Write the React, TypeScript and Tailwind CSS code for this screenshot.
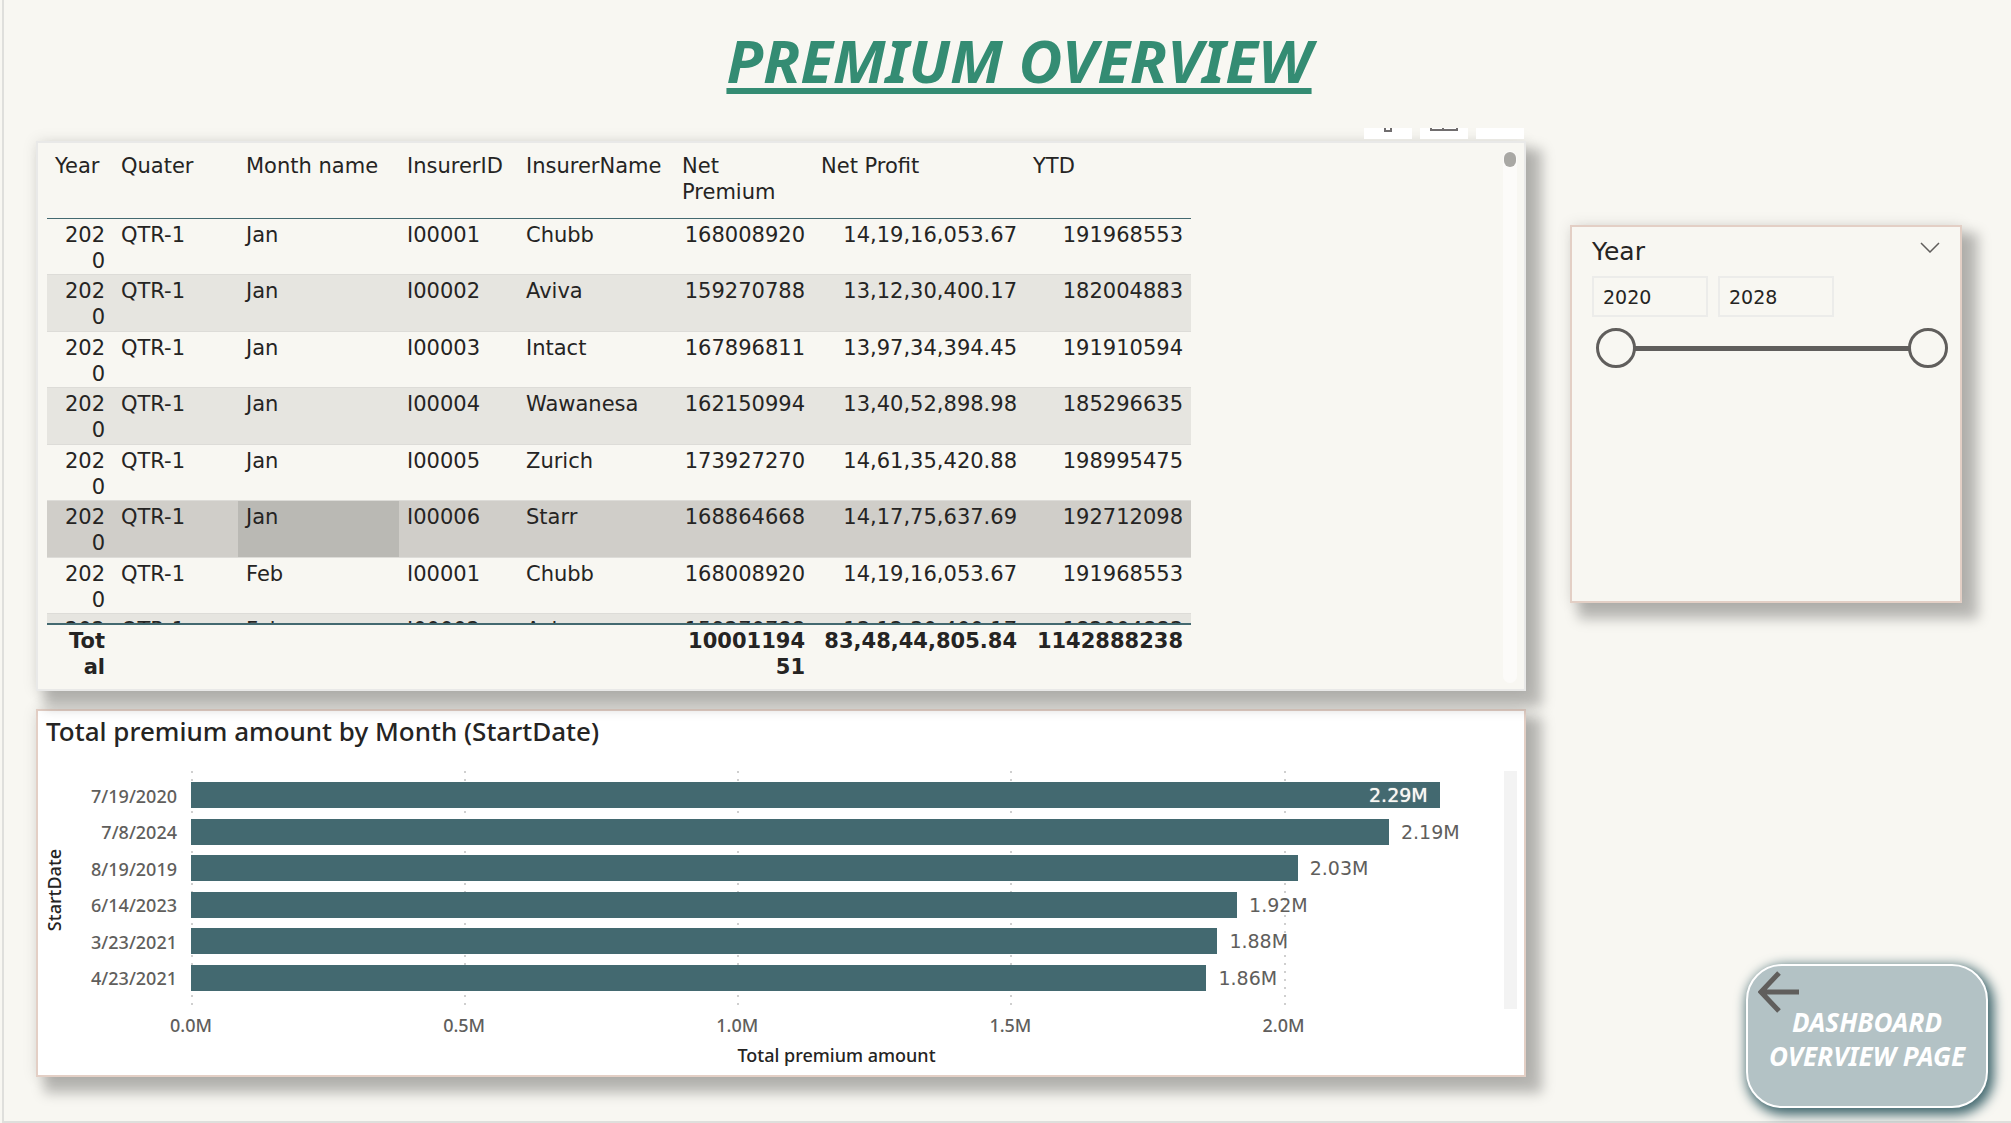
import { useState } from 'react';

type Row = [string, string, string, string, string, string, string, string];

const rows: Row[] = [
  ['2020', 'QTR-1', 'Jan', 'I00001', 'Chubb', '168008920', '14,19,16,053.67', '191968553'],
  ['2020', 'QTR-1', 'Jan', 'I00002', 'Aviva', '159270788', '13,12,30,400.17', '182004883'],
  ['2020', 'QTR-1', 'Jan', 'I00003', 'Intact', '167896811', '13,97,34,394.45', '191910594'],
  ['2020', 'QTR-1', 'Jan', 'I00004', 'Wawanesa', '162150994', '13,40,52,898.98', '185296635'],
  ['2020', 'QTR-1', 'Jan', 'I00005', 'Zurich', '173927270', '14,61,35,420.88', '198995475'],
  ['2020', 'QTR-1', 'Jan', 'I00006', 'Starr', '168864668', '14,17,75,637.69', '192712098'],
  ['2020', 'QTR-1', 'Feb', 'I00001', 'Chubb', '168008920', '14,19,16,053.67', '191968553'],
  ['2020', 'QTR-1', 'Feb', 'I00002', 'Aviva', '159270788', '13,12,30,400.17', '182004883'],
];

const headers = ['Year', 'Quater', 'Month name', 'InsurerID', 'InsurerName', 'Net Premium', 'Net Profit', 'YTD'];
const totals = ['Total', '', '', '', '', '1000119451', '83,48,44,805.84', '1142888238'];
const isNumeric = (column: number) => column === 0 || column > 4;

const HIGHLIGHTED_ROW = 5;
const HIGHLIGHTED_COLUMN = 2;

const bars = [
  { date: '7/19/2020', value: 2.286, label: '2.29M', inside: true },
  { date: '7/8/2024', value: 2.193, label: '2.19M' },
  { date: '8/19/2019', value: 2.026, label: '2.03M' },
  { date: '6/14/2023', value: 1.915, label: '1.92M' },
  { date: '3/23/2021', value: 1.879, label: '1.88M' },
  { date: '4/23/2021', value: 1.859, label: '1.86M' },
];
const AXIS_MAX = 2.4;
const ticks = ['0.0M', '0.5M', '1.0M', '1.5M', '2.0M'];

const shadow = 'shadow-[12px_12px_12px_4px_rgba(0,0,0,0.26),0_0_14px_rgba(0,0,0,0.1)]';

function rowColor(index: number) {
  if (index === HIGHLIGHTED_ROW) return 'bg-[#d0cec9]';
  return index % 2 ? 'bg-[#e6e5e0]' : 'bg-[#f8f7f2]';
}

const tableClass = 'w-[1144px] table-fixed border-separate border-spacing-0 text-[21px] leading-[26px] text-[#252423]';

function Columns() {
  return (
    <colgroup>
      <col className="w-[66px]" />
      <col className="w-[125px]" />
      <col className="w-[161px]" />
      <col className="w-[119px]" />
      <col className="w-[156px]" />
      <col className="w-[139px]" />
      <col className="w-[212px]" />
      <col className="w-[166px]" />
    </colgroup>
  );
}

function PremiumTable() {
  return (
    <section className={`relative flex border-2 border-[#e9e9e8] bg-[#f8f7f2] pr-[7px] pb-[6px] pl-[9px] ${shadow}`}>
      <div className="absolute right-0 bottom-full mb-1 flex gap-2">
        <button aria-label="Filters" className="flex h-[11px] w-12 justify-center bg-white">
          <svg width="8" height="4" viewBox="0 0 8 4" fill="none" stroke="#706d6e" strokeWidth="2">
            <path d="M1 0V3H7V0" />
          </svg>
        </button>
        <button aria-label="Focus mode" className="flex h-[11px] w-12 justify-center bg-white">
          <svg width="28" height="3" viewBox="0 0 28 3" fill="#706d6e">
            <path d="M0 1H28V3H0zM0 0H2V1H0zM26 0H28V1H26zM12 0H14V1H12z" />
          </svg>
        </button>
        <button aria-label="More options" className="h-[11px] w-12 bg-white" />
      </div>
      <div className="flex-1">
        <div className="h-[480px] overflow-y-auto [scrollbar-width:none]">
          <table className={tableClass}>
            <Columns />
            <thead>
              <tr className="h-[76px]">
                {headers.map((header) => (
                  <th
                    key={header}
                    className="sticky top-0 border-b border-[#436970] bg-[#f8f7f2] px-2 pt-[10px] text-left align-top font-normal"
                  >
                    {header}
                  </th>
                ))}
              </tr>
            </thead>
            <tbody>
              {rows.map((row, r) => (
                <tr key={r} className={`${r % 2 ? 'h-[57px]' : 'h-[56px]'} ${rowColor(r)}`}>
                  {row.map((cell, c) => (
                    <td
                      key={c}
                      className={`border-b border-[#dddcd8] px-2 pt-[3px] align-top break-all ${isNumeric(c) ? 'text-right' : ''} ${
                        r === HIGHLIGHTED_ROW && c === HIGHLIGHTED_COLUMN ? 'bg-[#bab9b4]' : ''
                      }`}
                    >
                      {cell}
                    </td>
                  ))}
                </tr>
              ))}
            </tbody>
          </table>
        </div>
        <table aria-label="Totals" className={tableClass}>
          <Columns />
          <tbody>
            <tr className="h-[60px]">
              {totals.map((total, c) => (
                <td key={c} className="border-t-2 border-[#436970] px-2 pt-[3px] text-right align-top font-bold break-all">
                  {total}
                </td>
              ))}
            </tr>
          </tbody>
        </table>
      </div>
      <div className="mt-2 w-[14px] rounded-full bg-[#fcfbf9] px-px py-px">
        <div className="h-[15px] rounded-full bg-[#a9a8a4]" />
      </div>
    </section>
  );
}

function PremiumChart() {
  return (
    <section className={`border-2 border-[#e3cfc5] bg-white pr-[7px] pb-1 pl-2 font-['Noto_Sans',sans-serif] ${shadow}`}>
      <h2 className="text-[26px] leading-10 font-medium text-[#252423]">Total premium amount by Month (StartDate)</h2>
      <div className="mt-5 flex">
        <div className="flex h-[238px] w-4 items-center justify-center">
          <span className="-rotate-90 text-[18px] leading-5 font-medium whitespace-nowrap text-[#252423]">StartDate</span>
        </div>
        <div className="flex h-[238px] w-[129px] flex-col pr-[14px] pt-[7px] pb-3 text-right text-[18px] font-medium text-[#605e5c]">
          {bars.map((bar) => (
            <span key={bar.date} className="flex flex-1 items-center justify-end">
              {bar.date}
            </span>
          ))}
        </div>
        <div className="flex-1">
          <div className="relative">
            <div className="absolute inset-0 grid grid-cols-[5fr_5fr_5fr_5fr_4fr]">
              {ticks.map((tick) => (
                <div
                  key={tick}
                  className="w-[2px] bg-[repeating-linear-gradient(to_bottom,#cfcfcf_0px,#cfcfcf_2px,transparent_2px,transparent_8px)]"
                />
              ))}
            </div>
            <div className="relative flex h-[238px] flex-col pt-[6px] pb-[13px] font-['DejaVu_Sans',sans-serif] text-[19px]">
              {bars.map((bar) => (
                <div key={bar.date} className="flex flex-1 items-center">
                  <div
                    className="flex h-[26px] items-center justify-end bg-[#436970] pr-3 text-[#f8f7f2]"
                    style={{ width: `${(bar.value / AXIS_MAX) * 100}%` }}
                  >
                    {bar.inside && <span className="[text-shadow:0_0_1px_#f8f7f2]">{bar.label}</span>}
                  </div>
                  {!bar.inside && <span className="pl-3 text-[#605e5c]">{bar.label}</span>}
                </div>
              ))}
            </div>
          </div>
          <div className="mt-1 grid grid-cols-[5fr_5fr_5fr_5fr_4fr] text-[18px] leading-6 font-medium text-[#605e5c]">
            {ticks.map((tick) => (
              <span key={tick} className="flex w-0 justify-center whitespace-nowrap">
                {tick}
              </span>
            ))}
          </div>
          <div className="mt-[6px] pr-5 pb-1 text-center text-[18px] leading-6 font-medium text-[#252423]">Total premium amount</div>
        </div>
        <div className="ml-[2px] h-[238px] w-[13px] bg-[#f3f3f3]" />
      </div>
    </section>
  );
}

const thumb =
  '[&::-webkit-slider-thumb]:pointer-events-auto [&::-webkit-slider-thumb]:size-10 [&::-webkit-slider-thumb]:appearance-none [&::-webkit-slider-thumb]:rounded-full [&::-webkit-slider-thumb]:border-3 [&::-webkit-slider-thumb]:border-solid [&::-webkit-slider-thumb]:border-[#605e5c] [&::-webkit-slider-thumb]:bg-[#f8f7f2]';

function YearSlicer() {
  const [from, setFrom] = useState(2020);
  const [to, setTo] = useState(2028);
  const box = 'h-[41px] w-[116px] border-2 border-[#ececea] bg-transparent px-[9px] text-[19px] text-[#252423]';
  const range = `pointer-events-none absolute inset-0 h-10 w-full appearance-none bg-transparent ${thumb}`;
  return (
    <section className={`h-[378px] border-2 border-[#e3cfc5] bg-[#f8f7f2] pt-[9px] pr-3 pl-5 text-[#252423] ${shadow}`}>
      <div className="flex items-start justify-between pr-2">
        <h2 className="text-[25px] leading-8">Year</h2>
        <button aria-label="Slicer options" className="pt-[6px]">
          <svg width="20" height="11" viewBox="0 0 20 11" fill="none" stroke="#605e5c" strokeWidth="1.5">
            <path d="M1 1L10 10L19 1" />
          </svg>
        </button>
      </div>
      <div className="mt-2 flex gap-[10px]">
        <input aria-label="Start year" className={box} value={from} onChange={(e) => setFrom(Number(e.target.value))} />
        <input aria-label="End year" className={box} value={to} onChange={(e) => setTo(Number(e.target.value))} />
      </div>
      <div className="relative mt-[11px] ml-1 flex h-10 items-center px-5">
        <div className="h-[5px] flex-1 bg-[#605e5c]" />
        <input aria-label="From year" type="range" min={2020} max={2028} value={from} onChange={(e) => setFrom(Number(e.target.value))} className={range} />
        <input aria-label="To year" type="range" min={2020} max={2028} value={to} onChange={(e) => setTo(Number(e.target.value))} className={range} />
      </div>
    </section>
  );
}

export default function App() {
  return (
    <div className="bg-[#f8f7f2] pl-[2px] font-['DejaVu_Sans',sans-serif]">
      <div className="flex min-h-screen flex-col border-b-2 border-l-2 border-[#dfdfdc] pr-[49px] pl-8">
        <h1 className="pt-5 pl-10 text-center font-['Noto_Sans',sans-serif] text-[60px] leading-[80px] font-bold text-[#348c73] italic underline decoration-[6px] underline-offset-[5px]">
          PREMIUM OVERVIEW
        </h1>
        <main className="mt-[41px] flex flex-1 gap-[44px]">
          <div className="flex min-w-0 flex-1 flex-col gap-[18px]">
            <PremiumTable />
            <PremiumChart />
          </div>
          <aside className="flex w-[392px] flex-col justify-between pt-[84px]">
            <YearSlicer />
            <a
              href="#dashboard"
              className="relative -mr-[26px] mb-[13px] flex h-[144px] w-[242px] items-center justify-center self-end rounded-[36px] border-2 border-white bg-[#b3c2c5] pt-[6px] text-center font-['Noto_Sans',sans-serif] text-[26px] leading-[34px] font-bold text-white italic shadow-[3px_4px_12px_3px_#436970]"
            >
              <svg className="absolute top-[5px] left-[10px]" width="42" height="42" viewBox="0 0 42 42" fill="none" stroke="#605e5c" strokeWidth="5">
                <path d="M41 21H4M21 2L3 21L21 40" />
              </svg>
              <span className="whitespace-nowrap">
                DASHBOARD
                <br />
                OVERVIEW PAGE
              </span>
            </a>
          </aside>
        </main>
      </div>
    </div>
  );
}
